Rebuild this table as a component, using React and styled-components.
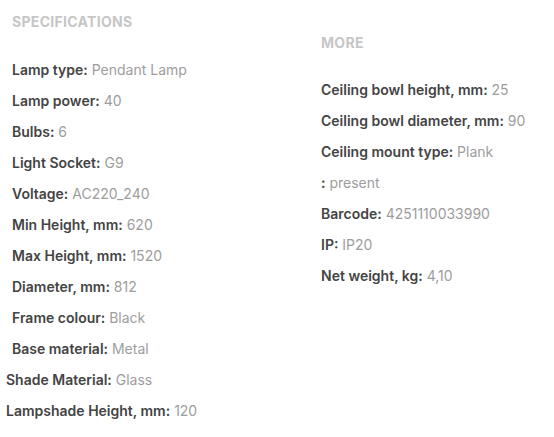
import React from 'react'
import styled, { createGlobalStyle } from 'styled-components'

const GlobalStyle = createGlobalStyle`
  body {
    margin: 0;
    background: #fff;
    font-family: Inter, "Liberation Sans", Arial, sans-serif;
  }
`

const Page = styled.div`
  display: flex;
  width: 554px;
  height: 437px;
  overflow: hidden;
`
const Column = styled.div`
  width: ${({ width }) => width};
  padding-top: ${({ top }) => top};
`
const Title = styled.div`
  padding-left: 12px;
  font-size: 14px;
  line-height: 20px;
  font-weight: 700;
  letter-spacing: 0.3px;
  text-transform: uppercase;
  color: #c6c6c6;
`
const List = styled.ul`
  list-style: none;
  margin: ${({ gap }) => gap} 0 0;
  padding: 0;
`
const Item = styled.li`
  padding-left: ${({ flush }) => (flush ? '6px' : '12px')};
  font-size: 14px;
  line-height: 31px;
  white-space: nowrap;
`
const Label = styled.span`
  font-weight: 600;
  color: #444;
`
const Value = styled.span`
  color: #9d9d9d;
`

const specs = [
  ['Lamp type', 'Pendant Lamp'],
  ['Lamp power', '40'],
  ['Bulbs', '6'],
  ['Light Socket', 'G9'],
  ['Voltage', 'AC220_240'],
  ['Min Height, mm', '620'],
  ['Max Height, mm', '1520'],
  ['Diameter, mm', '812'],
  ['Frame colour', 'Black'],
  ['Base material', 'Metal'],
  ['Shade Material', 'Glass', true],
  ['Lampshade Height, mm', '120', true],
]

const more = [
  ['Ceiling bowl height, mm', '25'],
  ['Ceiling bowl diameter, mm', '90'],
  ['Ceiling mount type', 'Plank'],
  ['', 'present'],
  ['Barcode', '4251110033990'],
  ['IP', 'IP20'],
  ['Net weight, kg', '4,10'],
]

function Spec({ label, value, flush }) {
  return (
    <Item flush={flush}>
      <Label>{label}:</Label> <Value>{value}</Value>
    </Item>
  )
}

export default function App() {
  return (
    <Page>
      <GlobalStyle />
      <Column width="309px" top="12px">
        <Title>Specifications</Title>
        <List gap="22px">
          {specs.map(([label, value, flush]) => (
            <Spec key={label} label={label} value={value} flush={flush} />
          ))}
        </List>
      </Column>
      <Column width="245px" top="33px">
        <Title>More</Title>
        <List gap="21px">
          {more.map(([label, value]) => (
            <Spec key={value} label={label} value={value} />
          ))}
        </List>
      </Column>
    </Page>
  )
}
